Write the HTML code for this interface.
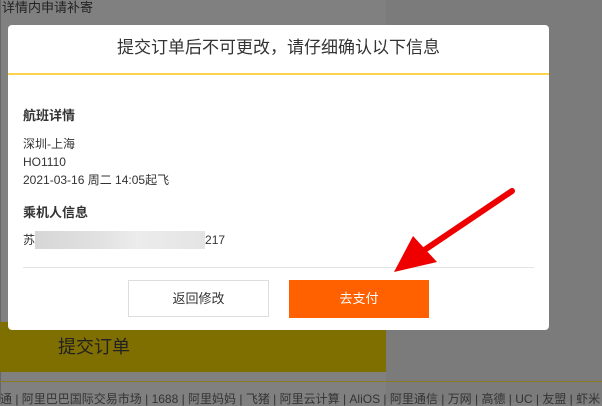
<!DOCTYPE html>
<html><head><meta charset="utf-8"><style>
body{margin:0;width:602px;height:402px;overflow:hidden;background:#808080;position:relative;font-family:"Liberation Sans","Noto Sans CJK SC",sans-serif}
.a{position:absolute}
</style></head><body>
<div class="a" style="left:0;top:0;width:1px;height:402px;background:#666"></div>
<div class="a" style="left:386px;top:0;width:216px;height:402px;background:#7b7b7b"></div>
<div class="a" style="left:2px;top:0;font-size:13px;color:#222;line-height:16px">详情内申请补寄</div>
<div class="a" style="left:0;top:322px;width:386px;height:50px;background:#7f6e00"></div>
<div class="a" style="left:58px;top:335px;font-size:18px;color:#222;line-height:24px">提交订单</div>
<div class="a" style="left:0;top:381px;width:602px;height:1px;background:#8a7a20"></div>
<div class="a" style="left:0;top:392px;font-size:12px;color:#333;white-space:nowrap;line-height:14px">通 | 阿里巴巴国际交易市场 | 1688 | 阿里妈妈 | 飞猪 | 阿里云计算 | AliOS | 阿里通信 | 万网 | 高德 | UC | 友盟 | 虾米 | 阿</div>
<div class="a" style="left:8px;top:25px;width:541px;height:305px;background:#fff;border-radius:4px"></div>
<div class="a" style="left:8px;top:36px;width:541px;text-align:center;font-size:17px;color:#333;line-height:24px">提交订单后不可更改，请仔细确认以下信息</div>
<div class="a" style="left:8px;top:73px;width:541px;height:2px;background:#fcd34a"></div>
<div class="a" style="left:23px;top:107px;font-size:13px;font-weight:bold;color:#333;line-height:18px">航班详情</div>
<div class="a" style="left:23px;top:135px;font-size:12px;color:#333;line-height:18px">深圳-上海<br>HO1110<br>2021-03-16 周二 14:05起飞</div>
<div class="a" style="left:23px;top:204px;font-size:13px;font-weight:bold;color:#333;line-height:18px">乘机人信息</div>
<div class="a" style="left:23px;top:231px;font-size:12px;color:#333;line-height:18px">苏<span style="display:inline-block;width:170px;height:18px;vertical-align:top;background:linear-gradient(90deg,#d6d6d6,#e2e2e2 40%,#ececec 60%,#e4e4e4)"></span>217</div>
<div class="a" style="left:23px;top:267px;width:511px;height:1px;background:#e3e3e3"></div>
<div class="a" style="left:128px;top:280px;width:141px;height:37px;border:1px solid #ddd;box-sizing:border-box;text-align:center;line-height:35px;font-size:13px;color:#333">返回修改</div>
<div class="a" style="left:289px;top:280px;width:140px;height:38px;background:#ff6000;text-align:center;line-height:38px;font-size:13px;color:#fff">去支付</div>
<svg class="a" style="left:0;top:0" width="602" height="402"><line x1="512" y1="191" x2="420" y2="253" stroke="#ee0000" stroke-width="6" stroke-linecap="round"/><polygon points="394,272 413,236 437,262" fill="#ee0000"/></svg>
</body></html>
